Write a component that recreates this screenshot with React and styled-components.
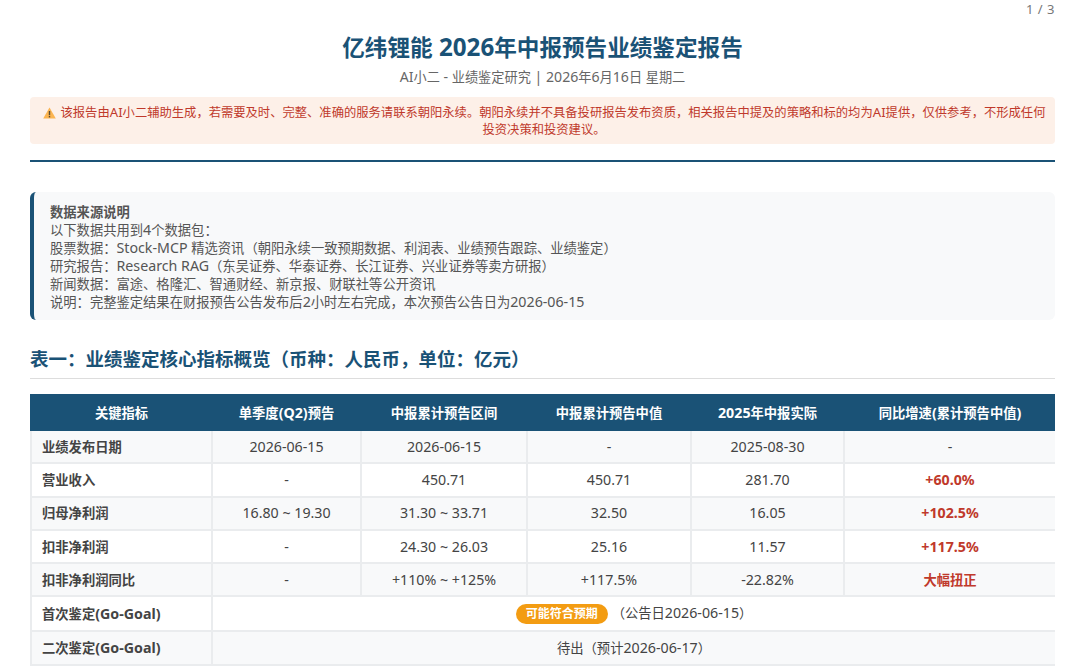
import React from "react"
import styled, { createGlobalStyle } from "styled-components"

const Global = createGlobalStyle`
	html, body {
		margin: 0;
		padding: 0;
		background: #fff;
	}
	body {
		font-family: "Noto Sans", "Noto Sans CJK SC", "Open Sans", sans-serif;
		color: #333;
	}
`

const Page = styled.div`
	width: 1025px;
	margin-left: 30px;
	height: 670px;
	overflow: hidden;
`

const Counter = styled.div`
	text-align: right;
	font-size: 13px;
	line-height: 18px;
	color: #777;
	letter-spacing: 0.5px;
`

const Title = styled.h1`
	margin: 12px 0 0;
	text-align: center;
	font-size: 22.6px;
	line-height: 34px;
	font-weight: 700;
	color: #1a5276;
`

const Subtitle = styled.div`
	margin-top: 3px;
	text-align: center;
	font-size: 13.2px;
	line-height: 18px;
	color: #666;
`

const Warning = styled.div`
	margin-top: 11px;
	padding: 7px 8px 6px 11px;
	background: #fdf0e8;
	border-radius: 4px;
	text-align: center;
	font-size: 12.3px;
	line-height: 16.5px;
	color: #c0392b;
`

const WarnLine = styled.div`
	white-space: nowrap;
`

const WarnIcon = styled.svg`
	width: 13px;
	height: 12px;
	margin-right: 5px;
	vertical-align: -2px;
`

const Rule = styled.hr`
	margin: 16px 0 0;
	border: 0;
	border-top: 2px solid #1a5276;
`

const Source = styled.div`
	margin-top: 30px;
	padding: 11px 16px 9px;
	background: #f8f9fa;
	border-left: 4px solid #1a5276;
	border-radius: 6px;
	font-size: 13.3px;
	line-height: 18px;
	color: #555;
`

const SourceHead = styled.div`
	font-weight: 700;
`

const Heading = styled.h2`
	margin: 23px 0 15px;
	padding-bottom: 4px;
	border-bottom: 1px solid #ddd;
	font-size: 18.5px;
	line-height: 31px;
	font-weight: 700;
	color: #1a5276;
`

const Table = styled.table`
	width: 100%;
	table-layout: fixed;
	border-collapse: collapse;
	font-size: 13.3px;
	line-height: 18px;
`

const Col = styled.col`
	width: ${p => p.$w}px;
`

const Th = styled.th`
	box-sizing: border-box;
	height: 35px;
	padding: 0;
	background: #1a5276;
	color: #fff;
	font-weight: 700;
	text-align: center;
	border: 2px solid #1a5276;
`

const Row = styled.tr`
	background: ${p => (p.$alt ? "#f8f9fa" : "#fff")};
`

const Td = styled.td`
	box-sizing: border-box;
	height: ${p => (p.$tall ? 34.5 : 33.3)}px;
	padding: 0;
	border: 2px solid #eaecee;
	text-align: center;
	color: #444;
`

const Label = styled(Td)`
	padding-left: 10px;
	text-align: left;
	font-weight: 700;
`

const Up = styled.span`
	color: #c0392b;
	font-weight: 700;
`

const Pill = styled.span`
	display: inline-block;
	padding: 0 10px;
	margin-right: 4px;
	line-height: 20px;
	border-radius: 10px;
	background: #f39c12;
	color: #fff;
	font-size: 12px;
	font-weight: 700;
`

// latin runs sit a little larger than the cjk text around them
const Latin = styled.span`
	font-size: 1.07em;
`

const mix = text =>
	text.split(/([\x20-\x7e]+)/).map((part, i) => (i % 2 ? <Latin key={i}>{part}</Latin> : part))

const columns = ["关键指标", "单季度(Q2)预告", "中报累计预告区间", "中报累计预告中值", "2025年中报实际", "同比增速(累计预告中值)"]

const rows = [
	["业绩发布日期", "2026-06-15", "2026-06-15", "-", "2025-08-30", "-", false],
	["营业收入", "-", "450.71", "450.71", "281.70", "+60.0%", true],
	["归母净利润", "16.80 ~ 19.30", "31.30 ~ 33.71", "32.50", "16.05", "+102.5%", true],
	["扣非净利润", "-", "24.30 ~ 26.03", "25.16", "11.57", "+117.5%", true],
	["扣非净利润同比", "-", "+110% ~ +125%", "+117.5%", "-22.82%", "大幅扭正", true],
]

const sources = [
	"以下数据共用到4个数据包：",
	"股票数据：Stock-MCP 精选资讯（朝阳永续一致预期数据、利润表、业绩预告跟踪、业绩鉴定）",
	"研究报告：Research RAG（东吴证券、华泰证券、长江证券、兴业证券等卖方研报）",
	"新闻数据：富途、格隆汇、智通财经、新京报、财联社等公开资讯",
	"说明：完整鉴定结果在财报预告公告发布后2小时左右完成，本次预告公告日为2026-06-15",
]

export default function App() {
	return (
		<Page>
			<Global />
			<Counter>1 / 3</Counter>
			<Title>{mix("亿纬锂能 2026年中报预告业绩鉴定报告")}</Title>
			<Subtitle>{mix("AI小二 - 业绩鉴定研究 | 2026年6月16日 星期二")}</Subtitle>
			<Warning>
				<WarnLine>
					<WarnIcon viewBox="0 0 13 12">
						<path d="M6.5 0.5 L12.8 11.5 L0.2 11.5 Z" fill="#fbb450" />
						<rect x="5.8" y="4" width="1.4" height="4.2" fill="#5c4a32" />
						<rect x="5.8" y="9" width="1.4" height="1.4" fill="#5c4a32" />
					</WarnIcon>
					{mix("该报告由AI小二辅助生成，若需要及时、完整、准确的服务请联系朝阳永续。朝阳永续并不具备投研报告发布资质，相关报告中提及的策略和标的均为AI提供，仅供参考，不形成任何")}
				</WarnLine>
				<WarnLine>投资决策和投资建议。</WarnLine>
			</Warning>
			<Rule />
			<Source>
				<SourceHead>数据来源说明</SourceHead>
				{sources.map(line => (
					<div key={line}>{mix(line)}</div>
				))}
			</Source>
			<Heading>表一：业绩鉴定核心指标概览（币种：人民币，单位：亿元）</Heading>
			<Table>
				<colgroup>
					<Col $w={181} />
					<Col $w={149} />
					<Col $w={166} />
					<Col $w={164} />
					<Col $w={153} />
					<Col $w={212} />
				</colgroup>
				<thead>
					<tr>
						{columns.map(c => (
							<Th key={c}>{mix(c)}</Th>
						))}
					</tr>
				</thead>
				<tbody>
					{rows.map((r, i) => (
						<Row key={r[0]} $alt={i % 2 == 0}>
							<Label>{r[0]}</Label>
							<Td>{mix(r[1])}</Td>
							<Td>{mix(r[2])}</Td>
							<Td>{mix(r[3])}</Td>
							<Td>{mix(r[4])}</Td>
							<Td>{r[6] ? <Up>{mix(r[5])}</Up> : mix(r[5])}</Td>
						</Row>
					))}
					<Row>
						<Label $tall>{mix("首次鉴定(Go-Goal)")}</Label>
						<Td $tall colSpan={5}>
							<Pill>可能符合预期</Pill>{mix("（公告日2026-06-15）")}
						</Td>
					</Row>
					<Row $alt>
						<Label $tall>{mix("二次鉴定(Go-Goal)")}</Label>
						<Td $tall colSpan={5}>{mix("待出（预计2026-06-17）")}</Td>
					</Row>
				</tbody>
			</Table>
		</Page>
	)
}
